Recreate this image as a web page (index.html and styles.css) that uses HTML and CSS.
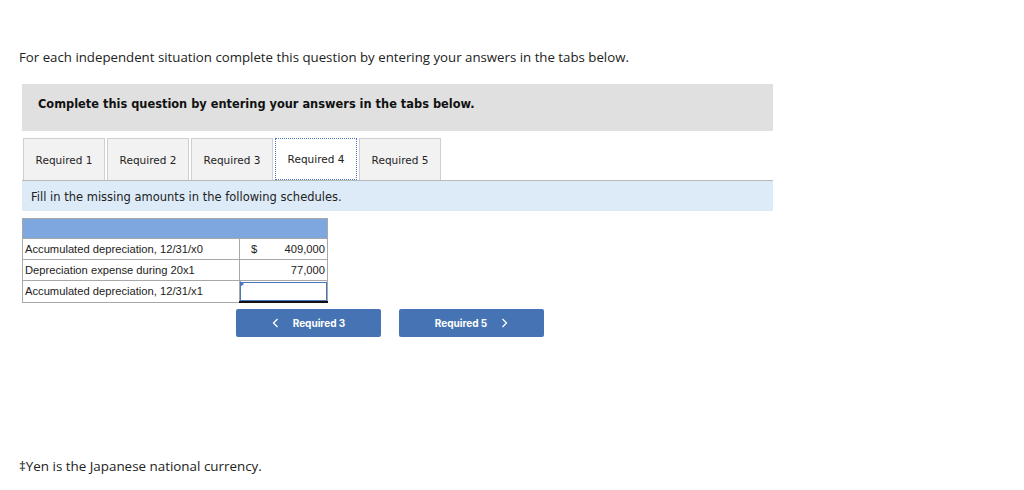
FILE: index.html
```html
<!DOCTYPE html>
<html>
<head>
<meta charset="utf-8">
<link rel="stylesheet" href="styles.css">
</head>
<body>
<div class="page">
  <p class="intro">For each independent situation complete this question by entering your answers in the tabs below.</p>
  <div class="panel">
    <div class="panel-head">Complete this question by entering your answers in the tabs below.</div>
    <div class="tabs">
      <div class="tab">Required 1</div>
      <div class="tab">Required 2</div>
      <div class="tab">Required 3</div>
      <div class="tab active">Required 4</div>
      <div class="tab">Required 5</div>
    </div>
    <div class="instr">Fill in the missing amounts in the following schedules.</div>
    <table class="sched">
      <tr class="hdr"><td colspan="2"></td></tr>
      <tr><td class="lbl">Accumulated depreciation, 12/31/x0</td><td class="amt"><div class="amt-in"><span>$</span><span>409,000</span></div></td></tr>
      <tr><td class="lbl">Depreciation expense during 20x1</td><td class="amt"><div class="amt-in"><span></span><span>77,000</span></div></td></tr>
      <tr><td class="lbl">Accumulated depreciation, 12/31/x1</td><td class="inp"><div class="box"></div></td></tr>
    </table>
    <div class="nav">
      <div class="btn"><svg class="chev" width="7" height="10" viewBox="0 0 7 10"><polyline points="5.5,1 1.5,5 5.5,9" fill="none" stroke="#fff" stroke-width="1.3"/></svg>Required 3</div>
      <div class="btn">Required 5<svg class="chev right" width="7" height="10" viewBox="0 0 7 10"><polyline points="1.5,1 5.5,5 1.5,9" fill="none" stroke="#fff" stroke-width="1.3"/></svg></div>
    </div>
  </div>
  <p class="foot">‡Yen is the Japanese national currency.</p>
</div>
</body>
</html>
```
FILE: styles.css
```css
html, body { margin: 0; padding: 0; background: #fff; }
.page { padding: 48px 0 0 19px; font-family: "Open Sans", "Lato", sans-serif; color: #222; }
.intro { margin: 0; font-size: 13.25px; line-height: 18px; }
.panel { margin: 18px 0 0 3px; width: 751px; }
.panel-head {
  background: #e0e0e0; height: 47px; box-sizing: border-box;
  padding: 13px 0 0 16px;
  font-family: "DejaVu Sans", Verdana, sans-serif; font-weight: bold; font-size: 11.4px; color: #111;
}
.tabs { display: flex; gap: 2px; margin-top: 7px; padding-left: 1px; }
.tab {
  width: 82px; height: 42px; box-sizing: border-box;
  background: #f2f2f2; border: 1px solid #cfcfcf; border-bottom: none;
  font-family: "DejaVu Sans", Verdana, sans-serif; font-size: 10.5px; color: #222;
  display: flex; align-items: center; justify-content: center;
}
.tab.active { background: #fff; border: 1.5px dotted #4a76c0; }
.instr {
  background: #ddebf8; border-top: 1px solid #b8b8b8; height: 31px; box-sizing: border-box;
  padding: 9px 0 0 9px;
  font-family: "DejaVu Sans", Verdana, sans-serif; font-size: 11.5px; color: #222;
}
.sched {
  margin-top: 7px; border-collapse: collapse; width: 306px;
  font-family: "Liberation Sans", Arial, sans-serif; font-size: 11.2px; color: #222;
}
.sched td { border: 1px solid #a8a8a8; height: 20px; padding: 0; line-height: 20px; }
.sched .hdr td { background: #7ea7df; height: 19px; }
.sched .lbl { width: 214px; padding-left: 2px; }
.amt-in { display: flex; justify-content: space-between; padding: 0 2px 0 11px; }
.inp { position: relative; border-bottom: 2px solid #111 !important; }
.box { height: 17px; border: 1px solid #4a76c0; }
.inp::before {
  content: ""; position: absolute; left: 0; top: 0;
  border-left: 4px solid #4a76c0; border-top: 3px solid transparent; border-bottom: 3px solid transparent;
}
.nav { display: flex; gap: 18px; margin: 6px 0 0 214px; }
.btn {
  width: 145px; height: 28px; box-sizing: border-box; background: #4673b3; border-radius: 2px;
  color: #fff; font-family: "Inter", "Open Sans", sans-serif; font-weight: bold; font-size: 10px;
  display: flex; align-items: center; justify-content: center;
}
.chev { margin-right: 14px; display: block; }
.chev.right { margin: 0 0 0 14px; }
.foot { margin: 120px 0 0; font-size: 13.4px; line-height: 18px; }
```
